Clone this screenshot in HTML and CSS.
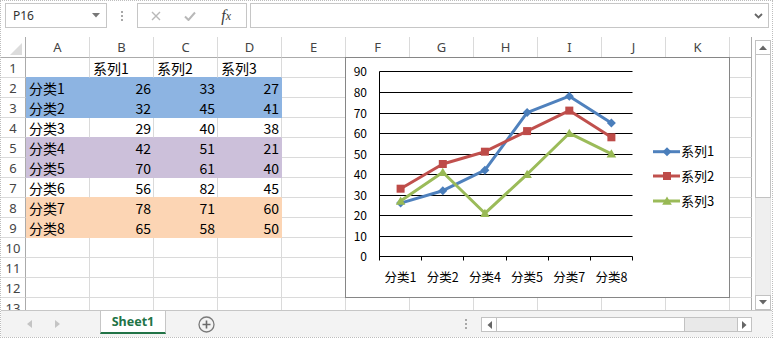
FILE: index.html
```html
<!doctype html>
<html><head><meta charset="utf-8"/>
<link rel="stylesheet" href="styles.css">
<title>Sheet1</title>
</head>
<body>
<div class="window">

  <div class="toolbar">
    <div class="namebox">
      <span>P16</span>
      <svg class="caret" width="8" height="5" viewBox="0 0 8 5"><path d="M0 0H8L4 4.5Z" fill="#777"/></svg>
    </div>
    <div class="grip"><i></i><i></i><i></i></div>
    <div class="fbtns">
      <span class="slot"><svg width="10" height="10" viewBox="0 0 10 10"><path d="M1 1L9 9M9 1L1 9" stroke="#b8b8b8" stroke-width="1.4"/></svg></span>
      <span class="slot"><svg width="12" height="10" viewBox="0 0 12 10"><path d="M1 5.5L4.5 9L11 1.5" stroke="#b8b8b8" stroke-width="2" fill="none"/></svg></span>
      <span class="slot fx">f<sub>x</sub></span>
    </div>
    <div class="finput">
      <svg class="chev" width="9" height="6" viewBox="0 0 9 6"><path d="M1 1L4.5 4.5L8 1" stroke="#666" stroke-width="1.8" fill="none"/></svg>
    </div>
  </div>

  <div class="sheet">
    <div class="grid">
      <div class="cells">
        <div class="corner"><b></b></div><div class="ch">A</div><div class="ch">B</div><div class="ch">C</div><div class="ch">D</div><div class="ch">E</div><div class="ch">F</div><div class="ch">G</div><div class="ch">H</div><div class="ch">I</div><div class="ch">J</div><div class="ch">K</div><div class="ch edge"></div>

        <div class="rh">1</div><div class="cell to-blue"></div><div class="cell to-blue">系列1</div><div class="cell to-blue">系列2</div><div class="cell to-blue">系列3</div><div class="cell"></div><div class="cell"></div><div class="cell"></div><div class="cell"></div><div class="cell"></div><div class="cell"></div><div class="cell"></div><div class="cell edge"></div>
        <div class="rh">2</div><div class="cell blue">分类1</div><div class="cell blue num">26</div><div class="cell blue num">33</div><div class="cell blue num">27</div><div class="cell"></div><div class="cell"></div><div class="cell"></div><div class="cell"></div><div class="cell"></div><div class="cell"></div><div class="cell"></div><div class="cell edge"></div>
        <div class="rh">3</div><div class="cell blue">分类2</div><div class="cell blue num">32</div><div class="cell blue num">45</div><div class="cell blue num">41</div><div class="cell"></div><div class="cell"></div><div class="cell"></div><div class="cell"></div><div class="cell"></div><div class="cell"></div><div class="cell"></div><div class="cell edge"></div>
        <div class="rh">4</div><div class="cell to-purple">分类3</div><div class="cell to-purple num">29</div><div class="cell to-purple num">40</div><div class="cell to-purple num">38</div><div class="cell"></div><div class="cell"></div><div class="cell"></div><div class="cell"></div><div class="cell"></div><div class="cell"></div><div class="cell"></div><div class="cell edge"></div>
        <div class="rh">5</div><div class="cell purple">分类4</div><div class="cell purple num">42</div><div class="cell purple num">51</div><div class="cell purple num">21</div><div class="cell"></div><div class="cell"></div><div class="cell"></div><div class="cell"></div><div class="cell"></div><div class="cell"></div><div class="cell"></div><div class="cell edge"></div>
        <div class="rh">6</div><div class="cell purple">分类5</div><div class="cell purple num">70</div><div class="cell purple num">61</div><div class="cell purple num">40</div><div class="cell"></div><div class="cell"></div><div class="cell"></div><div class="cell"></div><div class="cell"></div><div class="cell"></div><div class="cell"></div><div class="cell edge"></div>
        <div class="rh">7</div><div class="cell to-orange">分类6</div><div class="cell to-orange num">56</div><div class="cell to-orange num">82</div><div class="cell to-orange num">45</div><div class="cell"></div><div class="cell"></div><div class="cell"></div><div class="cell"></div><div class="cell"></div><div class="cell"></div><div class="cell"></div><div class="cell edge"></div>
        <div class="rh">8</div><div class="cell orange">分类7</div><div class="cell orange num">78</div><div class="cell orange num">71</div><div class="cell orange num">60</div><div class="cell"></div><div class="cell"></div><div class="cell"></div><div class="cell"></div><div class="cell"></div><div class="cell"></div><div class="cell"></div><div class="cell edge"></div>
        <div class="rh">9</div><div class="cell orange">分类8</div><div class="cell orange num">65</div><div class="cell orange num">58</div><div class="cell orange num">50</div><div class="cell"></div><div class="cell"></div><div class="cell"></div><div class="cell"></div><div class="cell"></div><div class="cell"></div><div class="cell"></div><div class="cell edge"></div>
        <div class="rh">10</div><div class="cell"></div><div class="cell"></div><div class="cell"></div><div class="cell"></div><div class="cell"></div><div class="cell"></div><div class="cell"></div><div class="cell"></div><div class="cell"></div><div class="cell"></div><div class="cell"></div><div class="cell edge"></div>
        <div class="rh">11</div><div class="cell"></div><div class="cell"></div><div class="cell"></div><div class="cell"></div><div class="cell"></div><div class="cell"></div><div class="cell"></div><div class="cell"></div><div class="cell"></div><div class="cell"></div><div class="cell"></div><div class="cell edge"></div>
        <div class="rh">12</div><div class="cell"></div><div class="cell"></div><div class="cell"></div><div class="cell"></div><div class="cell"></div><div class="cell"></div><div class="cell"></div><div class="cell"></div><div class="cell"></div><div class="cell"></div><div class="cell"></div><div class="cell edge"></div>
        <div class="rh">13</div><div class="cell"></div><div class="cell"></div><div class="cell"></div><div class="cell"></div><div class="cell"></div><div class="cell"></div><div class="cell"></div><div class="cell"></div><div class="cell"></div><div class="cell"></div><div class="cell"></div><div class="cell edge"></div>
      </div>

      <!-- line chart floating over F1:K12 -->
      <div class="chart">
        <svg width="383" height="239" viewBox="0 0 383 239">
          <defs>
            <path id="dia" d="M0 -4.5L4.5 0L0 4.5L-4.5 0Z"/>
            <rect id="sq" x="-4" y="-4" width="8" height="8"/>
            <path id="tri" d="M0 -4.5L4.8 3.8H-4.8Z"/>
          </defs>
          <g stroke="#000" stroke-width="1">
            <path d="M33.5 13.5H286.5M33.5 34.5H286.5M33.5 55.5H286.5M33.5 75.5H286.5M33.5 96.5H286.5M33.5 116.5H286.5M33.5 137.5H286.5M33.5 157.5H286.5M33.5 178.5H286.5M33.5 198.5H286.5"/>
            <path d="M33.5 13.5V202.5M75.5 198.5V202.5M117.5 198.5V202.5M160.5 198.5V202.5M202.5 198.5V202.5M244.5 198.5V202.5M286.5 198.5V202.5"/>
          </g>
          <g class="ylab" text-anchor="end">
            <text x="21" y="17.5">90</text>
            <text x="21" y="38.5">80</text>
            <text x="21" y="59.5">70</text>
            <text x="21" y="79.5">60</text>
            <text x="21" y="100.5">50</text>
            <text x="21" y="120.5">40</text>
            <text x="21" y="141.5">30</text>
            <text x="21" y="161.5">20</text>
            <text x="21" y="182.5">10</text>
            <text x="21" y="202.5">0</text>
          </g>
          <g class="xlab" text-anchor="middle">
            <text x="54.6" y="224">分类1</text>
            <text x="96.8" y="224">分类2</text>
            <text x="138.9" y="224">分类4</text>
            <text x="181.1" y="224">分类5</text>
            <text x="223.3" y="224">分类7</text>
            <text x="265.4" y="224">分类8</text>
          </g>

          <polyline points="54.6,145.1 96.8,132.7 138.9,112.2 181.1,54.6 223.3,38.2 265.4,65" fill="none" stroke="#4f81bd" stroke-width="3" stroke-linejoin="round"/>
          <g fill="#4a7ebb">
            <use href="#dia" x="54.6" y="145.1"/><use href="#dia" x="96.8" y="132.7"/><use href="#dia" x="138.9" y="112.2"/>
            <use href="#dia" x="181.1" y="54.6"/><use href="#dia" x="223.3" y="38.2"/><use href="#dia" x="265.4" y="65"/>
          </g>

          <polyline points="54.6,130.7 96.8,106 138.9,93.7 181.1,73.1 223.3,52.6 265.4,79.3" fill="none" stroke="#c0504d" stroke-width="3" stroke-linejoin="round"/>
          <g fill="#be4b48">
            <use href="#sq" x="54.6" y="130.7"/><use href="#sq" x="96.8" y="106"/><use href="#sq" x="138.9" y="93.7"/>
            <use href="#sq" x="181.1" y="73.1"/><use href="#sq" x="223.3" y="52.6"/><use href="#sq" x="265.4" y="79.3"/>
          </g>

          <polyline points="54.6,143 96.8,114.2 138.9,155.3 181.1,116.3 223.3,75.2 265.4,95.8" fill="none" stroke="#9bbb59" stroke-width="3" stroke-linejoin="round"/>
          <g fill="#98b954">
            <use href="#tri" x="54.6" y="143"/><use href="#tri" x="96.8" y="114.2"/><use href="#tri" x="138.9" y="155.3"/>
            <use href="#tri" x="181.1" y="116.3"/><use href="#tri" x="223.3" y="75.2"/><use href="#tri" x="265.4" y="95.8"/>
          </g>

          <!-- legend -->
          <g class="legend">
            <path d="M307 93.7H334" stroke="#4f81bd" stroke-width="3"/>
            <use href="#dia" x="321" y="93.7" fill="#4a7ebb"/>
            <text x="335" y="98.2">系列1</text>
            <path d="M307 118H334" stroke="#c0504d" stroke-width="3"/>
            <use href="#sq" x="321" y="118" fill="#be4b48"/>
            <text x="335" y="122.5">系列2</text>
            <path d="M307 143H334" stroke="#9bbb59" stroke-width="3"/>
            <use href="#tri" x="321" y="143" fill="#98b954"/>
            <text x="335" y="147.5">系列3</text>
          </g>
        </svg>
      </div>
    </div>

    <div class="vscroll">
      <div class="sbtn"><svg width="8" height="5" viewBox="0 0 8 5"><path d="M0 5H8L4 0.5Z" fill="#666"/></svg></div>
      <div class="vthumb"></div>
      <div class="vtrack"></div>
      <div class="sbtn"><svg width="8" height="5" viewBox="0 0 8 5"><path d="M0 0H8L4 4.5Z" fill="#666"/></svg></div>
    </div>
  </div>

  <div class="tabbar">
    <div class="tabnav">
      <svg width="5" height="8" viewBox="0 0 5 8"><path d="M5 0V8L0 4Z" fill="#c4c4c4"/></svg>
      <svg width="5" height="8" viewBox="0 0 5 8"><path d="M0 0V8L5 4Z" fill="#c4c4c4"/></svg>
    </div>
    <div class="tab">Sheet1</div>
    <div class="addsheet">
      <svg width="17" height="17" viewBox="0 0 17 17"><circle cx="8.5" cy="8.5" r="7.5" fill="none" stroke="#7a7a7a" stroke-width="1.3"/><path d="M8.5 4.5V12.5M4.5 8.5H12.5" stroke="#6a6a6a" stroke-width="1.6"/></svg>
    </div>
    <div class="spacer"></div>
    <div class="grip small"><i></i><i></i><i></i></div>
    <div class="hscroll">
      <div class="sbtn"><svg width="5" height="8" viewBox="0 0 5 8"><path d="M5 0V8L0.5 4Z" fill="#666"/></svg></div>
      <div class="hthumb"></div>
      <div class="htrack"></div>
      <div class="sbtn"><svg width="5" height="8" viewBox="0 0 5 8"><path d="M0 0V8L4.5 4Z" fill="#666"/></svg></div>
    </div>
  </div>

</div>
</body>
</html>
```

FILE: styles.css
```css
* { box-sizing:border-box; }
body { margin:0; background:#fff; font-family:"Noto Sans", "Noto Sans CJK SC", sans-serif; }

.window { width:773px; height:338px; border:1px dotted #bdbdbd; overflow:hidden; display:flex; flex-direction:column; }

/* formula bar */
.toolbar { height:36px; flex:none; display:flex; align-items:flex-start; padding:2px 3px 0 4px; }
.namebox { width:102px; height:25px; border:1px solid #c6c6c6; display:flex; align-items:center; padding-left:7px; font-size:12px; color:#333; }
.namebox .caret { margin-left:auto; margin-right:6px; }
.grip { width:30px; height:25px; display:flex; flex-direction:column; align-items:center; justify-content:center; gap:2px; }
.grip i { display:block; width:2px; height:2px; background:#a8a8a8; }
.fbtns { width:110px; height:25px; border:1px solid #c6c6c6; display:flex; align-items:center; padding-left:1px; }
.fbtns .slot { width:34px; display:flex; justify-content:center; }
.fbtns .fx { width:40px; font-family:"Liberation Serif", serif; font-style:italic; font-size:16px; color:#3c3c3c; line-height:16px; }
.fbtns .fx sub { font-size:12px; vertical-align:-2px; }
.finput { flex:1; height:25px; margin-left:3px; border:1px solid #c6c6c6; display:flex; align-items:center; justify-content:flex-end; padding-right:5px; }

/* sheet */
.sheet { height:273px; flex:none; display:flex; }
.grid { width:751px; height:273px; position:relative; overflow:hidden; }
.cells { display:grid; grid-template-columns:25px repeat(11, 64px) 22px; grid-template-rows:21px; grid-auto-rows:20px; }

.corner, .ch, .rh, .cell { border-right:1px solid #dadada; border-bottom:1px solid #dadada; overflow:hidden; white-space:nowrap; }
.corner { border-right-color:#ababab; border-bottom-color:#ababab; display:flex; align-items:flex-end; justify-content:flex-end; padding:0 3px 2px 0; }
.corner b { width:0; height:0; border-left:12px solid transparent; border-bottom:12px solid #dcdcdc; }
.ch { border-bottom-color:#ababab; color:#444; font-size:13px; text-align:center; padding-top:2px; line-height:17px; }
.rh { border-right-color:#ababab; color:#444; font-size:13px; text-align:center; padding-top:2px; line-height:17px; }
.ch.edge, .cell.edge { border-right-color:#ababab; }
.cell { font-family:"Noto Sans CJK SC", sans-serif; font-size:14px; color:#000; padding:2px 2px 0 3px; line-height:17px; }
.cell.num { text-align:right; }

.cell.blue { background:#8db4e2; border-color:#8db4e2; }
.cell.purple { background:#ccc0da; border-color:#ccc0da; }
.cell.orange { background:#fcd5b4; border-color:#fcd5b4; }
.cell.to-blue { border-bottom-color:#8db4e2; }
.cell.to-purple { border-bottom-color:#ccc0da; }
.cell.to-orange { border-bottom-color:#fcd5b4; }

/* chart */
.chart { position:absolute; left:344px; top:20px; width:385px; height:241px; border:1px solid #868686; background:#fff; }
.chart svg { display:block; }
.chart text { font-family:"Noto Sans CJK SC", sans-serif; fill:#000; }
.ylab text { font-size:12px; }
.xlab text { font-size:12.5px; }
.legend text { font-size:13px; }

/* scroll bars */
.vscroll { width:20px; padding:3px 1px 0 3px; display:flex; flex-direction:column; }
.sbtn { width:16px; height:15px; border:1px solid #c2c2c2; background:#fff; display:flex; align-items:center; justify-content:center; flex:none; }
.vthumb { height:143px; border:1px solid #c2c2c2; border-top:none; background:#fff; flex:none; }
.vtrack { flex:1; background:#efefef; border-left:1px solid #e2e2e2; border-right:1px solid #e2e2e2; }

.tabbar { flex:1; border-top:1px solid #c6c6c6; background:#f3f3f3; display:flex; }
.tabnav { width:99px; display:flex; align-items:center; padding-left:26px; gap:23px; }
.tab { width:66px; height:23px; background:#fff; border-left:1px solid #c6c6c6; border-right:1px solid #c6c6c6; border-bottom:2px solid #217346; color:#217346; font-weight:bold; font-size:12.5px; text-align:center; line-height:21px; }
.addsheet { width:80px; display:flex; align-items:center; justify-content:center; }
.spacer { flex:1; }
.grip.small { width:15px; height:26px; }
.hscroll { width:271px; height:15px; margin:6px 20px 0 8px; display:flex; border:1px solid #c2c2c2; background:#e9e9e9; }
.hscroll .sbtn { width:15px; height:13px; border:none; }
.hscroll .sbtn:first-child { border-right:1px solid #c2c2c2; }
.hscroll .sbtn:last-child { border-left:1px solid #c2c2c2; width:14px; }
.hthumb { width:188px; background:#fff; border-right:1px solid #c2c2c2; }
.htrack { flex:1; }
```
